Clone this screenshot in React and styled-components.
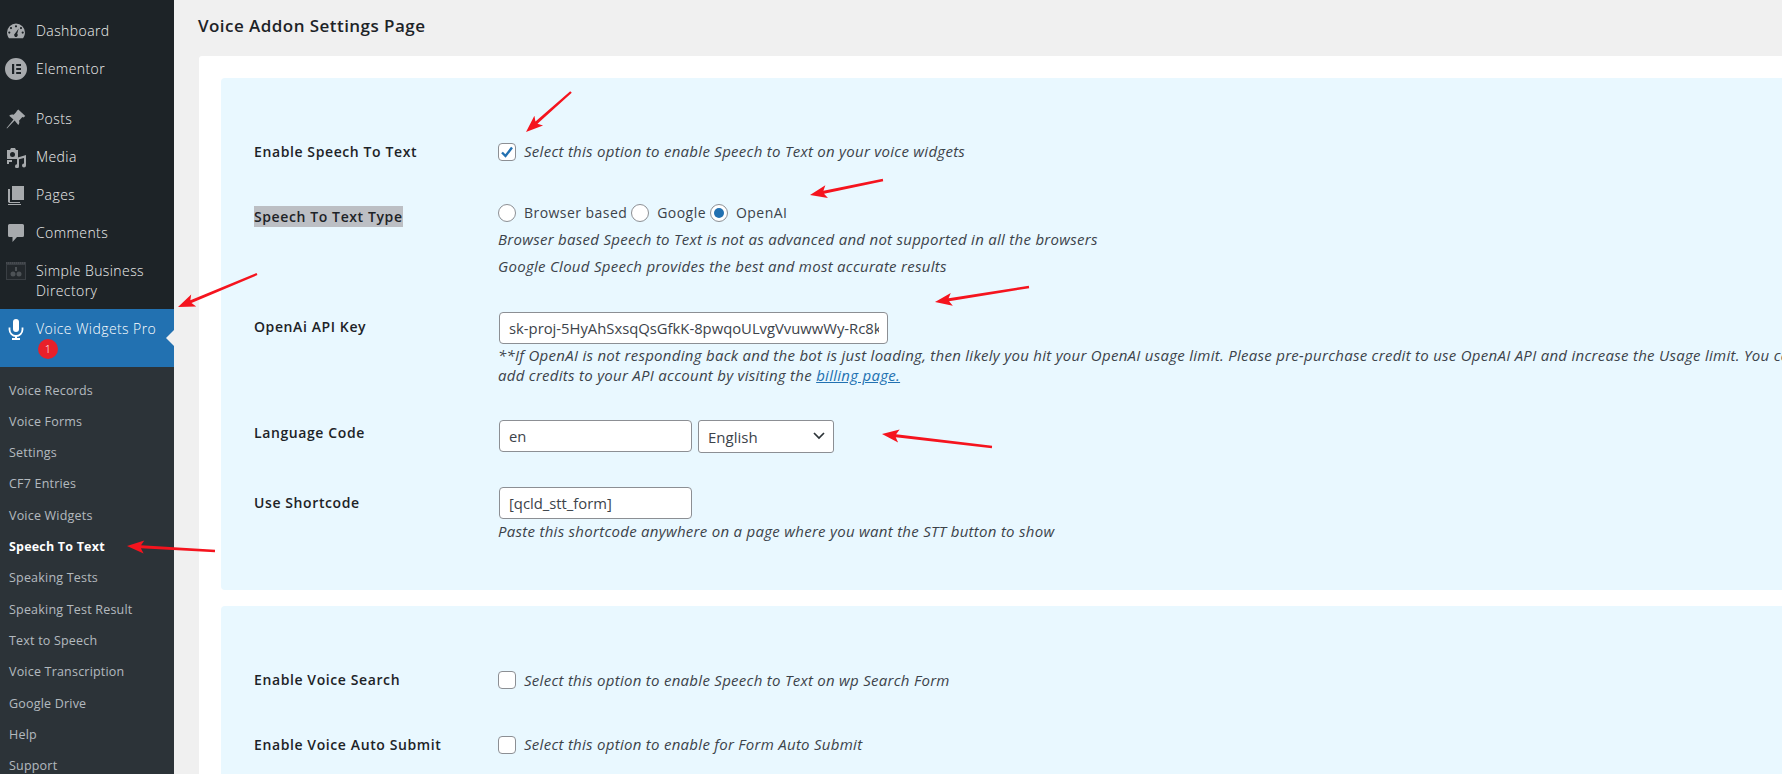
import React from "react";
import styled, { createGlobalStyle } from "styled-components";

const Global = createGlobalStyle`
  html, body { margin: 0; padding: 0; height: 100%; overflow: hidden; background: #f0f0f0; }
  body { font-family: "Open Sans", "Liberation Sans", sans-serif; font-size: 14px; color: #1d2327; }
`;

const Page = styled.div`
  position: relative;
  display: flex;
  width: 1782px;
  height: 774px;
  overflow: hidden;
  background: #f0f0f0;
`;
const Sidebar = styled.nav`
  flex: 0 0 174px;
  height: 774px;
  background: #1d2327;
  padding-top: 11px;
  box-sizing: border-box;
  overflow: hidden;
  display: flex;
  flex-direction: column;
`;
const MenuItem = styled.div`
  position: relative;
  display: flex;
  flex: none;
  align-items: flex-start;
  gap: 0;
  padding: 10px 4px 8px 0;
  line-height: 20px;
  letter-spacing: 0.42px;
  font-weight: 300;
  color: ${(p) => (p.$active ? "#fff" : "#f0f0f0")};
  background: ${(p) => (p.$active ? "#2271b1" : "transparent")};
  margin-bottom: ${(p) => (p.$gap ? "12px" : "0")};
`;
const IconSlot = styled.span`
  flex: 0 0 36px;
  height: 20px;
  display: flex;
  align-items: center;
  justify-content: center;
  padding-right: 4px;
  box-sizing: border-box;
  color: ${(p) => (p.$active ? "#fff" : "#a7aaad")};
`;
const Pointer = styled.span`
  position: absolute;
  right: 0;
  top: 21px;
  width: 0;
  height: 0;
  border: 8px solid transparent;
  border-right-color: #f0f0f0;
  border-left-width: 0;
`;
const Badge = styled.span`
  display: flex;
  align-items: center;
  justify-content: center;
  width: 20px;
  height: 20px;
  margin: 0 0 0 2px;
  border-radius: 50%;
  background: #e8202a;
  color: #fff;
  font-size: 11px;
  line-height: 20px;
`;
const SubMenu = styled.div`
  flex: 1;
  background: #2c3338;
  padding-top: 7.5px;
`;
const SubItem = styled.div`
  height: 31.33px;
  line-height: 31.33px;
  padding-left: 9px;
  font-size: 12.5px;
  letter-spacing: 0.2px;
  white-space: nowrap;
  color: ${(p) => (p.$current ? "#fff" : "rgba(240,246,252,.7)")};
  font-weight: ${(p) => (p.$current ? 700 : 400)};
`;
const Main = styled.main`
  flex: 1;
  min-width: 0;
  padding: 0 0 0 24px;
`;
const Title = styled.h1`
  margin: 0;
  height: 56px;
  box-sizing: border-box;
  padding: 14px 0 0;
  font-size: 17px;
  letter-spacing: 0.45px;
  line-height: 24px;
  font-weight: 600;
  color: #1d2327;
`;
const Card = styled.div`
  width: 1700px;
  margin-left: 1px;
  background: #fff;
  padding: 22px;
  box-sizing: border-box;
  border-radius: 3px;
  display: flex;
  flex-direction: column;
  gap: 16px;
`;
const Panel = styled.section`
  background: #e9f8ff;
  border-radius: 4px;
  padding: ${(p) => p.$pad};
  height: ${(p) => p.$h};
  box-sizing: border-box;
`;
const Row = styled.div`
  display: grid;
  grid-template-columns: 244px 1fr;
  margin-top: ${(p) => p.$mt || "0"};
  min-height: ${(p) => p.$min || "0"};
`;
const Label = styled.div`
  font-weight: 600;
  line-height: 20px;
  letter-spacing: 0.6px;
  color: #1d2327;
  padding-top: ${(p) => p.$pt || "0"};
`;
const Marked = styled.span`
  background: #bcbfc4;
  display: inline-block;
  line-height: 21px;
`;
const Field = styled.div`
  min-width: 0;
`;
const Inline = styled.div`
  display: flex;
  align-items: center;
  height: ${(p) => p.$h || "20px"};
`;
const Box = styled.span`
  flex: none;
  width: 18px;
  height: 18px;
  box-sizing: border-box;
  border: 1px solid #8c8f94;
  border-radius: 4px;
  background: #fff;
  display: flex;
  align-items: center;
  justify-content: center;
  margin-right: 8px;
  color: #2271b1;
`;
const Radio = styled.span`
  flex: none;
  width: 18px;
  height: 18px;
  box-sizing: border-box;
  border: 1px solid #8c8f94;
  border-radius: 50%;
  background: #fff;
  display: flex;
  align-items: center;
  justify-content: center;
  margin-right: 8px;
  &::before {
    content: "";
    display: ${(p) => (p.$on ? "block" : "none")};
    width: 10px;
    height: 10px;
    border-radius: 50%;
    background: #2271b1;
  }
`;
const RadioLabel = styled.span`
  color: #3c434a;
  margin-right: 4px;
  line-height: 20px;
  font-weight: 400;
  letter-spacing: 0.45px;
`;
const Hint = styled.p`
  margin: ${(p) => p.$m || "0"};
  font-size: 15px;
  font-weight: 400;
  letter-spacing: 0.28px;
  font-style: italic;
  line-height: ${(p) => p.$lh || "20px"};
  color: #3c434a;
  white-space: nowrap;
`;
const Link = styled.a`
  color: #2271b1;
  text-decoration: underline;
`;
const TextInput = styled.input`
  display: block;
  flex: none;
  width: ${(p) => p.$w};
  height: 32px;
  box-sizing: border-box;
  border: 1px solid #8c8f94;
  border-radius: 4px;
  background: #fff;
  padding: 0 8px 0 9px;
  margin: 0 0 0 1px;
  font: 400 14.8px/20px "Open Sans", sans-serif;
  color: #3c434a;
  outline: none;
`;
const SelectWrap = styled.div`
  position: relative;
  width: 136px;
  height: 33px;
  margin: 2px 0 0 6px;
`;
const Select = styled.select`
  appearance: none;
  width: 100%;
  height: 100%;
  box-sizing: border-box;
  border: 1px solid #8c8f94;
  border-radius: 3px;
  background: #fff;
  padding: 0 24px 0 9px;
  font: 400 15px "Open Sans", sans-serif;
  color: #3c434a;
`;
const Chevron = styled.svg`
  position: absolute;
  right: 8px;
  top: 11px;
  pointer-events: none;
`;
const ArrowLayer = styled.svg`
  position: absolute;
  left: 0;
  top: 0;
  pointer-events: none;
`;

const Gauge = () => (
  <svg width="20" height="20" viewBox="0 0 20 20" fill="currentColor">
    <path d="M10 2.5a9 9 0 0 0-9 9c0 2.2.8 4.2 2 5.7h14c1.200-1.500 2-3.500 2-5.700a9 9 0 0 0-9-9zm0 1.700a1.100 1.100 0 1 1 0 2.200 1.100 1.100 0 0 1 0-2.200zM5 6a1.100 1.100 0 1 1 0 2.200A1.100 1.100 0 0 1 5 6zm10 0a1.100 1.100 0 1 1 0 2.200A1.100 1.100 0 0 1 15 6zm-2.300 1.500-1.500 5.300a1.800 1.800 0 1 1-2.200-.2zM3.300 10.500a1.100 1.100 0 1 1 0 2.200 1.100 1.100 0 0 1 0-2.200zm13.400 0a1.100 1.100 0 1 1 0 2.200 1.100 1.100 0 0 1 0-2.200z" fillRule="evenodd" />
  </svg>
);
const ElementorIcon = () => (
  <svg width="22" height="22" viewBox="0 0 22 22" fill="currentColor">
    <path fillRule="evenodd" d="M11 0a11 11 0 1 0 0 22 11 11 0 0 0 0-22zM7 6h2.200v10H7zm4.200 0H16v2h-4.800zm0 4H16v2h-4.800zm0 4H16v2h-4.800z" />
  </svg>
);
const Pin = () => (
  <svg width="20" height="20" viewBox="0 0 20 20" fill="currentColor">
    <path d="M10.400 2.300 12.300.6l7 6.300-1.900 1.500-1-.3-3.400 3.700c.7 1.600.4 3.100-.7 4.300L8.600 11.600 1 19.400l-.4-.4 6.900-8.500-4.300-3.800c1.200-1.200 2.900-1.500 4.500-1l3-3.200z" />
  </svg>
);
const MediaIcon = () => (
  <svg width="21" height="21" viewBox="0 0 21 21" fill="currentColor">
    <path fillRule="evenodd" d="M1 3h3l1-2h4l1 2h2v9H1zm5.500 2a2.500 2.500 0 1 0 0 5 2.500 2.500 0 0 0 0-5z" />
    <path d="M20 8v10.500a2 2 0 1 1-2-2V11l-5 1.200v7a2 2 0 1 1-2-2v-6.500z" />
    <path d="M1 13h5v2H3v2H1z" />
  </svg>
);
const PagesIcon = () => (
  <svg width="16" height="19" viewBox="0 0 16 19" fill="currentColor">
    <path d="M4 0h12v14H4z" />
    <path d="M2 3v13h10v1H1.200L0 16V3z" />
    <path d="M0 18h13v1H0z" />
  </svg>
);
const CommentIcon = () => (
  <svg width="16" height="18" viewBox="0 0 16 18" fill="currentColor">
    <path d="M1.500 0h13A1.500 1.500 0 0 1 16 1.500v10a1.500 1.500 0 0 1-1.500 1.500H9l-4.500 5v-5h-3A1.500 1.500 0 0 1 0 11.500v-10A1.500 1.500 0 0 1 1.500 0z" />
  </svg>
);
const DirectoryIcon = () => (
  <svg width="20" height="18" viewBox="0 0 20 18">
    <rect width="20" height="18" fill="#3a3f44" />
    <rect x="1" y="3" width="18" height="14" fill="#23282c" />
    <path d="M0 1h20" stroke="#55595d" strokeDasharray="1 1" />
    <circle cx="7" cy="12" r="2.500" fill="#4d5256" />
    <circle cx="13" cy="12" r="2.500" fill="#4d5256" />
    <rect x="9" y="5" width="2" height="4" fill="#4d5256" />
  </svg>
);
const Mic = () => (
  <svg width="16" height="21" viewBox="0 0 16 21" fill="currentColor">
    <rect x="5" y="0" width="6" height="13" rx="3" />
    <path d="M1.500 8.500v2a6.500 6.500 0 0 0 13 0v-2" fill="none" stroke="currentColor" strokeWidth="1.800" />
    <path d="M7 16h2v3h3v2H4v-2h3z" />
  </svg>
);

const Arrow = ({ from, to, w = 3 }) => {
  const [x1, y1] = from;
  const [x2, y2] = to;
  const dx = x2 - x1;
  const dy = y2 - y1;
  const len = Math.hypot(dx, dy);
  const ux = dx / len;
  const uy = dy / len;
  const nx = -uy;
  const ny = ux;
  const head = 17;
  const half = 6.5;
  const bx = x2 - ux * head;
  const by = y2 - uy * head;
  const nk = x2 - ux * (head - 3);
  const nl = y2 - uy * (head - 3);
  const pts = [
    [x1 - (nx * w) / 2.6, y1 - (ny * w) / 2.6],
    [nk - (nx * w) / 2, nl - (ny * w) / 2],
    [bx - nx * half, by - ny * half],
    [x2, y2],
    [bx + nx * half, by + ny * half],
    [nk + (nx * w) / 2, nl + (ny * w) / 2],
    [x1 + (nx * w) / 2.6, y1 + (ny * w) / 2.6],
  ]
    .map((p) => p.join(","))
    .join(" ");
  return <polygon points={pts} fill="#f5141e" />;
};

const arrows = [
  { from: [571, 92], to: [526, 132] },
  { from: [883, 180], to: [810, 195] },
  { from: [1029, 287], to: [935, 302] },
  { from: [992, 447], to: [882, 434] },
  { from: [257, 274], to: [178, 307] },
  { from: [215, 551], to: [127, 546] },
];

const menu = [
  { label: "Dashboard", icon: <Gauge /> },
  { label: "Elementor", icon: <ElementorIcon />, gap: true },
  { label: "Posts", icon: <Pin /> },
  { label: "Media", icon: <MediaIcon /> },
  { label: "Pages", icon: <PagesIcon /> },
  { label: "Comments", icon: <CommentIcon /> },
  { label: "Simple Business Directory", icon: <DirectoryIcon /> },
];

const subs = [
  "Voice Records",
  "Voice Forms",
  "Settings",
  "CF7 Entries",
  "Voice Widgets",
  "Speech To Text",
  "Speaking Tests",
  "Speaking Test Result",
  "Text to Speech",
  "Voice Transcription",
  "Google Drive",
  "Help",
  "Support",
];

export default function App() {
  return (
    <Page>
      <Global />
      <Sidebar>
        {menu.map((m) => (
          <MenuItem key={m.label} $gap={m.gap}>
            <IconSlot>{m.icon}</IconSlot>
            <span>{m.label}</span>
          </MenuItem>
        ))}
        <MenuItem $active>
          <IconSlot $active>
            <Mic />
          </IconSlot>
          <div>
            <div>Voice Widgets Pro</div>
            <Badge>1</Badge>
          </div>
          <Pointer />
        </MenuItem>
        <SubMenu>
          {subs.map((s) => (
            <SubItem key={s} $current={s === "Speech To Text"}>
              {s}
            </SubItem>
          ))}
        </SubMenu>
      </Sidebar>
      <Main>
        <Title>Voice Addon Settings Page</Title>
        <Card>
          <Panel $pad="64px 0 0 33px" $h="512px">
            <Row>
              <Label>Enable Speech To Text</Label>
              <Field>
                <Inline>
                  <Box>
                    <svg width="14" height="14" viewBox="0 0 14 14">
                      <path d="M2 7.500 5.500 11 12 2.500" fill="none" stroke="currentColor" strokeWidth="2.400" />
                    </svg>
                  </Box>
                  <Hint $m="0 0 2px">Select this option to enable Speech to Text on your voice widgets</Hint>
                </Inline>
              </Field>
            </Row>
            <Row $mt="41px">
              <Label $pt="3px">
                <Marked>Speech To Text Type</Marked>
              </Label>
              <Field>
                <Inline>
                  <Radio />
                  <RadioLabel>Browser based</RadioLabel>
                  <Radio />
                  <RadioLabel>Google</RadioLabel>
                  <Radio $on />
                  <RadioLabel>OpenAI</RadioLabel>
                </Inline>
                <Hint $m="6px 0 0">Browser based Speech to Text is not as advanced and not supported in all the browsers</Hint>
                <Hint $m="7px 0 0">Google Cloud Speech provides the best and most accurate results</Hint>
              </Field>
            </Row>
            <Row $mt="36px">
              <Label $pt="5px">OpenAi API Key</Label>
              <Field>
                <TextInput $w="389px" readOnly value="sk-proj-5HyAhSxsqQsGfkK-8pwqoULvgVvuwwWy-Rc8kT9" />
                <Hint $m="1px 0 0">
                  **If OpenAI is not responding back and the bot is just loading, then likely you hit your OpenAI usage limit. Please pre-purchase credit to use OpenAI API and increase the Usage limit. You can
                  <br />
                  add credits to your API account by visiting the <Link href="#">billing page.</Link>
                </Hint>
              </Field>
            </Row>
            <Row $mt="33px">
              <Label $pt="5px">Language Code</Label>
              <Field>
                <Inline $h="35px">
                  <TextInput $w="193px" readOnly value="en" />
                  <SelectWrap>
                    <Select defaultValue="English">
                      <option>English</option>
                    </Select>
                    <Chevron width="14" height="10" viewBox="0 0 14 10">
                      <path d="M2 2l5 5 5-5" fill="none" stroke="#2c3338" strokeWidth="1.700" />
                    </Chevron>
                  </SelectWrap>
                </Inline>
              </Field>
            </Row>
            <Row $mt="34px">
              <Label $pt="6px">Use Shortcode</Label>
              <Field>
                <TextInput $w="193px" readOnly value="[qcld_stt_form]" />
                <Hint $m="2px 0 0">Paste this shortcode anywhere on a page where you want the STT button to show</Hint>
              </Field>
            </Row>
          </Panel>
          <Panel $pad="64px 0 0 33px" $h="200px">
            <Row>
              <Label>Enable Voice Search</Label>
              <Field>
                <Inline>
                  <Box />
                  <Hint>Select this option to enable Speech to Text on wp Search Form</Hint>
                </Inline>
              </Field>
            </Row>
            <Row $mt="45px">
              <Label>Enable Voice Auto Submit</Label>
              <Field>
                <Inline>
                  <Box />
                  <Hint $m="0 0 2px">Select this option to enable for Form Auto Submit</Hint>
                </Inline>
              </Field>
            </Row>
          </Panel>
        </Card>
      </Main>
      <ArrowLayer width="1782" height="774" viewBox="0 0 1782 774">
        {arrows.map((a, i) => (
          <Arrow key={i} {...a} />
        ))}
      </ArrowLayer>
    </Page>
  );
}
